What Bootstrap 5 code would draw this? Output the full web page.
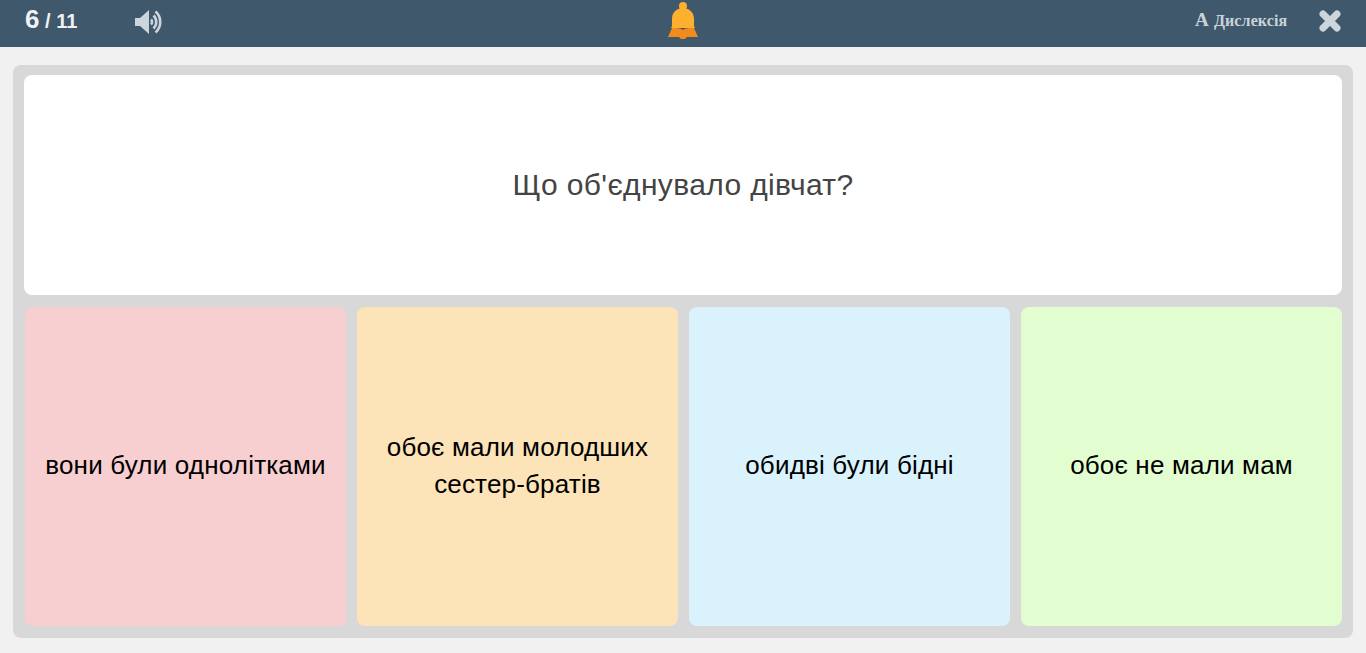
<!DOCTYPE html>
<html lang="uk">
<head>
<meta charset="utf-8">
<title>Вікторина</title>
<link href="https://cdn.jsdelivr.net/npm/bootstrap@5.3.0/dist/css/bootstrap.min.css" rel="stylesheet">
<style>
html,body{height:100%}
body{background:#f1f1f1;font-family:"Liberation Sans",Arial,sans-serif;overflow:hidden}
.quiz-top{height:47px;background:#3f586b;color:#fff}
.quiz-count{left:25px;top:2px;line-height:34px;font-size:20px;color:#eef2f5;font-weight:700}
.quiz-count b{font-size:26px}
.quiz-sound{left:134px;top:8px}
.quiz-bell{left:667px;top:1px}
.quiz-dys{left:1195px;top:9px;font-family:"Liberation Serif",serif;font-size:16px;line-height:22px;font-weight:700;color:#c9d3da;letter-spacing:.1px}
.quiz-dys b{font-size:19px;margin-right:1px}
.quiz-close{left:1319px;top:10px}
.quiz-board{margin:18px 13px 0;height:573px;background:#d8d8d8;border-radius:8px;padding:10px 11px 12px}
.quiz-q{height:220px;background:#fff;border-radius:8px;font-size:30px;letter-spacing:.36px;color:#444;margin-bottom:12px;padding-bottom:2px}
.quiz-grid{display:grid;grid-template-columns:repeat(4,321px);gap:11px;height:319px;margin-left:1px}
.quiz-a{border-radius:8px;font-size:26px;letter-spacing:.18px;line-height:37px;color:#000;text-align:center;padding:0 15px 2px}
.a-pink{background:#f7cfd0}
.a-sand{background:#fce3b8}
.a-sky{background:#d9f2fc}
.a-lime{background:#e2fdcf}
</style>
</head>
<body>
<header class="quiz-top position-relative">
  <div class="quiz-count position-absolute"><b>6</b> / 11</div>
  <svg class="quiz-sound position-absolute" width="30" height="28" viewBox="0 0 30 28" aria-label="Звук">
    <path d="M1 10h5l9-8v24l-9-8H1z" fill="#ccd5db"/>
    <g fill="none" stroke="#ccd5db" stroke-width="2.600"><path d="M17 11.500a3.500 3.500 0 0 1 0 5"/><path d="M19.500 7.500a9 9 0 0 1 0 13"/><path d="M21.500 3.500a14 14 0 0 1 0 21"/></g>
  </svg>
  <svg class="quiz-bell position-absolute" width="32" height="40" viewBox="0 0 32 40" aria-label="Дзвінок">
    <circle cx="16" cy="5" r="4" fill="#fdb02f"/>
    <path d="M5 25V18C5 11 10 7 16 7s11 4 11 11v7l1 2H4z" fill="#fdb02f"/>
    <path d="M5 27c4 0 9 0 11 2 2-2 7-2 11-2l4 9H20l-2 2h-4l-2-2H1z" fill="#f28a1c"/>
  </svg>
  <div class="quiz-dys position-absolute"><b>A</b> Дислексія</div>
  <svg class="quiz-close position-absolute" width="22" height="22" viewBox="0 0 22 22" aria-label="Закрити">
    <path d="M4 4l14 14M18 4L4 18" stroke="#ccd5db" stroke-width="7" stroke-linecap="round"/>
  </svg>
</header>
<main class="quiz-board">
  <div class="quiz-q d-flex align-items-center justify-content-center">Що об'єднувало дівчат?</div>
  <div class="quiz-grid">
    <div class="quiz-a a-pink d-flex align-items-center justify-content-center">вони були однолітками</div>
    <div class="quiz-a a-sand d-flex align-items-center justify-content-center">обоє мали молодших сестер-братів</div>
    <div class="quiz-a a-sky d-flex align-items-center justify-content-center">обидві були бідні</div>
    <div class="quiz-a a-lime d-flex align-items-center justify-content-center">обоє не мали мам</div>
  </div>
</main>
<script src="https://cdn.jsdelivr.net/npm/bootstrap@5.3.0/dist/js/bootstrap.bundle.min.js"></script>
</body>
</html>
